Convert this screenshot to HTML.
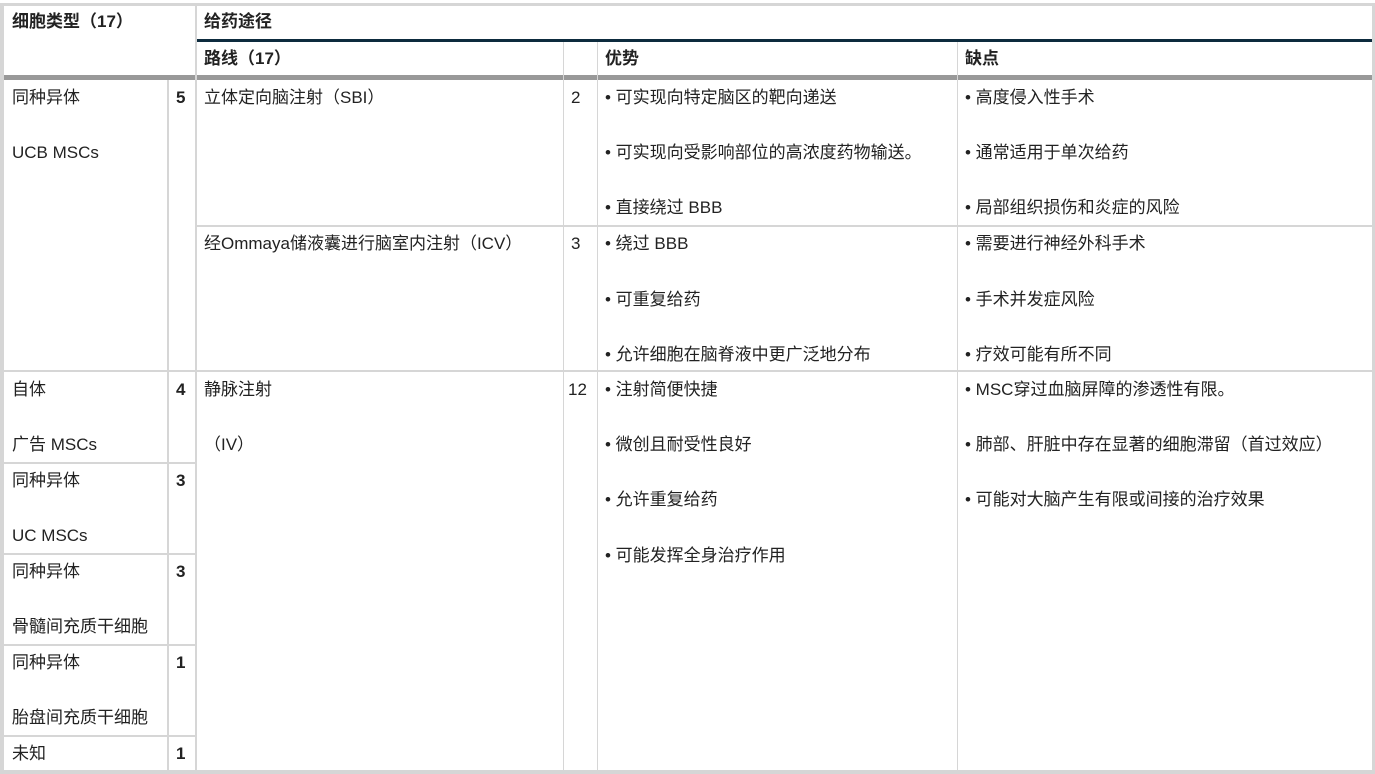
<!DOCTYPE html>
<html><head><meta charset="utf-8"><style>
html,body{margin:0;padding:0;background:#fff;}
body{width:1375px;height:774px;position:relative;overflow:hidden;font-family:"Liberation Sans","Noto Sans CJK SC",sans-serif;font-size:17px;color:#222;}
.b{position:absolute;background:#d6d6d6;}
.t{position:absolute;white-space:nowrap;line-height:24px;height:24px;}
.h{font-weight:bold;}
</style></head><body>
<div class="b" style="left:0;top:3px;width:1375px;height:3px"></div>
<div class="b" style="left:0;top:770px;width:1375px;height:4px"></div>
<div class="b" style="left:0;top:3px;width:4px;height:771px"></div>
<div class="b" style="left:1372px;top:3px;width:3px;height:771px"></div>
<div style="position:absolute;left:195px;top:39px;width:1177px;height:3px;background:#0d2b3e"></div>
<div style="position:absolute;left:4px;top:75px;width:1368px;height:5px;background:#999"></div>
<div class="b" style="left:195px;top:6px;width:2px;height:764px"></div>
<div class="b" style="left:167px;top:80px;width:2px;height:690px"></div>
<div class="b" style="left:563px;top:42px;width:1px;height:728px"></div>
<div class="b" style="left:597px;top:42px;width:1px;height:728px"></div>
<div class="b" style="left:957px;top:42px;width:1px;height:728px"></div>
<div class="b" style="left:197px;top:225px;width:1175px;height:2px"></div>
<div class="b" style="left:4px;top:370px;width:1368px;height:2px"></div>
<div class="b" style="left:4px;top:462px;width:191px;height:2px"></div>
<div class="b" style="left:4px;top:553px;width:191px;height:2px"></div>
<div class="b" style="left:4px;top:644px;width:191px;height:2px"></div>
<div class="b" style="left:4px;top:735px;width:191px;height:2px"></div>
<div class="t h" style="left:12px;top:10px">细胞类型（17）</div>
<div class="t h" style="left:204px;top:10px">给药途径</div>
<div class="t h" style="left:204px;top:47px">路线（17）</div>
<div class="t h" style="left:605px;top:47px">优势</div>
<div class="t h" style="left:965px;top:47px">缺点</div>
<div class="t" style="left:12px;top:86px">同种异体</div>
<div class="t" style="left:12px;top:141px">UCB MSCs</div>
<div class="t h" style="left:176px;top:86px">5</div>
<div class="t" style="left:12px;top:378px">自体</div>
<div class="t" style="left:12px;top:433px">广告 MSCs</div>
<div class="t h" style="left:176px;top:378px">4</div>
<div class="t" style="left:12px;top:469px">同种异体</div>
<div class="t" style="left:12px;top:524px">UC MSCs</div>
<div class="t h" style="left:176px;top:469px">3</div>
<div class="t" style="left:12px;top:560px">同种异体</div>
<div class="t" style="left:12px;top:615px">骨髓间充质干细胞</div>
<div class="t h" style="left:176px;top:560px">3</div>
<div class="t" style="left:12px;top:651px">同种异体</div>
<div class="t" style="left:12px;top:706px">胎盘间充质干细胞</div>
<div class="t h" style="left:176px;top:651px">1</div>
<div class="t" style="left:12px;top:742px">未知</div>
<div class="t h" style="left:176px;top:742px">1</div>
<div class="t" style="left:204px;top:86px">立体定向脑注射（SBI）</div>
<div class="t" style="left:571px;top:86px">2</div>
<div class="t" style="left:605px;top:86px">• 可实现向特定脑区的靶向递送</div>
<div class="t" style="left:605px;top:141px">• 可实现向受影响部位的高浓度药物输送。</div>
<div class="t" style="left:605px;top:196px">• 直接绕过 BBB</div>
<div class="t" style="left:965px;top:86px">• 高度侵入性手术</div>
<div class="t" style="left:965px;top:141px">• 通常适用于单次给药</div>
<div class="t" style="left:965px;top:196px">• 局部组织损伤和炎症的风险</div>
<div class="t" style="left:204px;top:232px">经Ommaya储液囊进行脑室内注射（ICV）</div>
<div class="t" style="left:571px;top:232px">3</div>
<div class="t" style="left:605px;top:232px">• 绕过 BBB</div>
<div class="t" style="left:605px;top:288px">• 可重复给药</div>
<div class="t" style="left:605px;top:343px">• 允许细胞在脑脊液中更广泛地分布</div>
<div class="t" style="left:965px;top:232px">• 需要进行神经外科手术</div>
<div class="t" style="left:965px;top:288px">• 手术并发症风险</div>
<div class="t" style="left:965px;top:343px">• 疗效可能有所不同</div>
<div class="t" style="left:204px;top:378px">静脉注射</div>
<div class="t" style="left:204px;top:433px">（IV）</div>
<div class="t" style="left:568px;top:378px">12</div>
<div class="t" style="left:605px;top:378px">• 注射简便快捷</div>
<div class="t" style="left:605px;top:433px">• 微创且耐受性良好</div>
<div class="t" style="left:605px;top:488px">• 允许重复给药</div>
<div class="t" style="left:605px;top:544px">• 可能发挥全身治疗作用</div>
<div class="t" style="left:965px;top:378px">• MSC穿过血脑屏障的渗透性有限。</div>
<div class="t" style="left:965px;top:433px">• 肺部、肝脏中存在显著的细胞滞留（首过效应）</div>
<div class="t" style="left:965px;top:488px">• 可能对大脑产生有限或间接的治疗效果</div>
</body></html>
